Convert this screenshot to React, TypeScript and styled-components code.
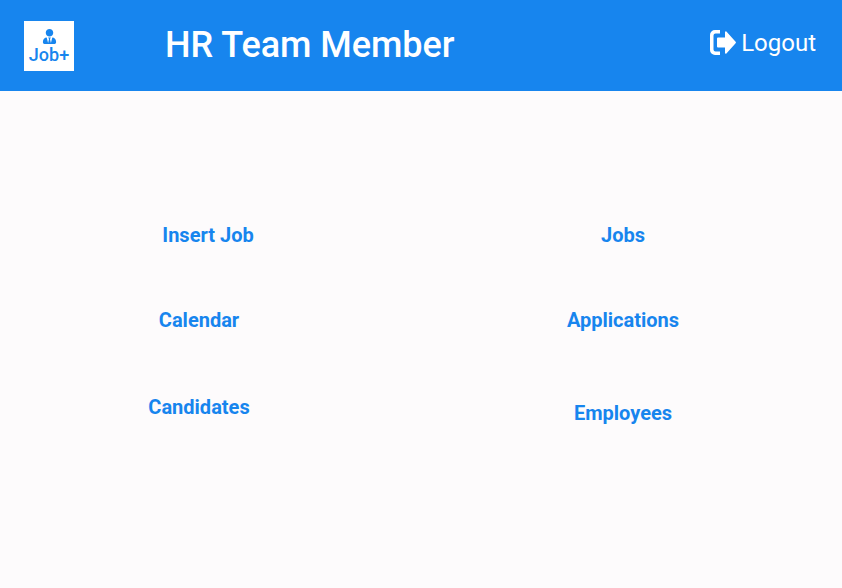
import React from "react";
import styled, { createGlobalStyle } from "styled-components";
import { FaUserTie } from "react-icons/fa";

const GlobalStyle = createGlobalStyle`
  html, body {
    margin: 0;
    padding: 0;
    background: #fdfbfc;
    font-family: Roboto, "Liberation Sans", sans-serif;
  }
`;

const Page = styled.div`
  width: 842px;
  height: 588px;
  overflow: hidden;
  background: #fdfbfc;
`;

const Header = styled.header`
  height: 91px;
  background: #1785ee;
  display: flex;
  align-items: center;
  padding: 0 26px 0 24px;
  color: #fff;
`;

const Logo = styled.div`
  width: 50px;
  height: 50px;
  box-sizing: border-box;
  padding-top: 8px;
  background: #fff;
  color: #1785ee;
  display: flex;
  flex-direction: column;
  align-items: center;
  gap: 2px;
  font-size: 18px;
  font-weight: 500;
  line-height: 18px;
`;

const Title = styled.h1`
  margin: 0 0 2px 91px;
  flex: 1;
  font-size: 36px;
  font-weight: 500;
  line-height: 42px;
  letter-spacing: -0.03px;
`;

const Logout = styled.a`
  display: flex;
  align-items: center;
  gap: 5px;
  margin-bottom: 5px;
  font-size: 24px;
  line-height: 28px;
  cursor: pointer;
`;

const LogoutIcon = styled.svg`
  width: 26px;
  height: 25px;
  margin-top: -2px;
  fill: #fff;
`;

const Menu = styled.nav`
  display: grid;
  grid-template-columns: 398px 1fr;
  grid-auto-rows: 85px;
  column-gap: 6px;
  padding-top: 101px;
`;

const MenuItem = styled.a<{ $nudge?: number; $drop?: number }>`
  display: flex;
  align-items: center;
  justify-content: center;
  padding-left: ${(p) => p.$nudge ?? 0}px;
  padding-top: ${(p) => p.$drop ?? 0}px;
  color: #1785ee;
  font-size: 20px;
  font-weight: 700;
  cursor: pointer;
`;

export default function App() {
  return (
    <Page>
      <GlobalStyle />
      <Header>
        <Logo>
          <FaUserTie size={15} />
          Job+
        </Logo>
        <Title>HR Team Member</Title>
        <Logout>
          <LogoutIcon viewBox="0 0 26 25">
            <path d="M5 0h5v3.5H5.5A2 2 0 0 0 3.5 5.5v14a2 2 0 0 0 2 2H10V25H5a5 5 0 0 1-5-5V5a5 5 0 0 1 5-5z" />
            <path d="M7 8.5a1 1 0 0 1 1-1h7V2.2a.8.8 0 0 1 1.4-.6l9.2 10.2a1 1 0 0 1 0 1.4L16.4 23.4a.8.8 0 0 1-1.4-.6v-5.3H8a1 1 0 0 1-1-1z" />
          </LogoutIcon>
          Logout
        </Logout>
      </Header>
      <Menu>
        <MenuItem $nudge={18}>Insert Job</MenuItem>
        <MenuItem>Jobs</MenuItem>
        <MenuItem>Calendar</MenuItem>
        <MenuItem>Applications</MenuItem>
        <MenuItem $drop={4}>Candidates</MenuItem>
        <MenuItem $drop={16}>Employees</MenuItem>
      </Menu>
    </Page>
  );
}
